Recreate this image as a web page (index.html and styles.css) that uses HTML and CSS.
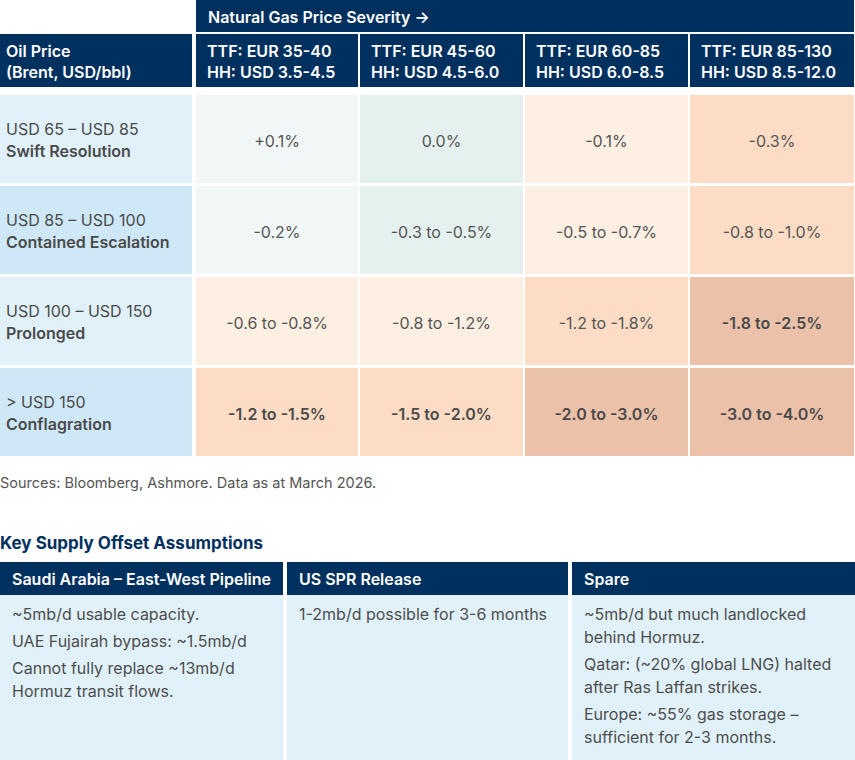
FILE: index.html
```html
<!DOCTYPE html>
<html lang="en">
<head>
<meta charset="utf-8">
<title>Oil and Gas Price Severity Matrix</title>
<link rel="stylesheet" href="styles.css">
</head>
<body>
<section class="matrix">
  <div class="matrix-head">
    <div class="corner"></div>
    <div class="severity">Natural Gas Price Severity →</div>
    <div class="hd hd-oil"><div>Oil Price<br>(Brent, USD/bbl)</div></div>
    <div class="hd"><div>TTF: EUR 35-40<br>HH: USD 3.5-4.5</div></div>
    <div class="hd"><div>TTF: EUR 45-60<br>HH: USD 4.5-6.0</div></div>
    <div class="hd"><div>TTF: EUR 60-85<br>HH: USD 6.0-8.5</div></div>
    <div class="hd"><div>TTF: EUR 85-130<br>HH: USD 8.5-12.0</div></div>
  </div>
  <div class="matrix-body">
    <div class="lbl lbl-a"><div><span class="rng">USD 65 – USD 85</span><span class="scn">Swift Resolution</span></div></div>
    <div class="val g1">+0.1%</div>
    <div class="val g2">0.0%</div>
    <div class="val p1">-0.1%</div>
    <div class="val p2">-0.3%</div>

    <div class="lbl lbl-b"><div><span class="rng">USD 85 – USD 100</span><span class="scn">Contained Escalation</span></div></div>
    <div class="val g1">-0.2%</div>
    <div class="val g2">-0.3 to -0.5%</div>
    <div class="val p1">-0.5 to -0.7%</div>
    <div class="val p2">-0.8 to -1.0%</div>

    <div class="lbl lbl-a"><div><span class="rng">USD 100 – USD 150</span><span class="scn">Prolonged</span></div></div>
    <div class="val p1">-0.6 to -0.8%</div>
    <div class="val p1">-0.8 to -1.2%</div>
    <div class="val p2">-1.2 to -1.8%</div>
    <div class="val p3 bold">-1.8 to -2.5%</div>

    <div class="lbl lbl-b"><div><span class="rng">&gt; USD 150</span><span class="scn">Conflagration</span></div></div>
    <div class="val p2 bold">-1.2 to -1.5%</div>
    <div class="val p2 bold">-1.5 to -2.0%</div>
    <div class="val p3 bold">-2.0 to -3.0%</div>
    <div class="val p3 bold">-3.0 to -4.0%</div>
  </div>
  <p class="source">Sources: Bloomberg, Ashmore. Data as at March 2026.</p>
</section>

<section class="supply">
  <h2 class="supply-title">Key Supply Offset Assumptions</h2>
  <div class="supply-grid">
    <div class="sup-col">
      <div class="sup-hd">Saudi Arabia – East-West Pipeline</div>
      <div class="sup-body">
        <p>~5mb/d usable capacity.</p>
        <p>UAE Fujairah bypass: ~1.5mb/d</p>
        <p>Cannot fully replace ~13mb/d Hormuz transit flows.</p>
      </div>
    </div>
    <div class="sup-col">
      <div class="sup-hd">US SPR Release</div>
      <div class="sup-body">
        <p>1-2mb/d possible for 3-6 months</p>
      </div>
    </div>
    <div class="sup-col">
      <div class="sup-hd">Spare</div>
      <div class="sup-body">
        <p>~5mb/d but much landlocked behind Hormuz.</p>
        <p>Qatar: (~20% global LNG) halted after Ras Laffan strikes.</p>
        <p>Europe: ~55% gas storage – sufficient for 2-3 months.</p>
      </div>
    </div>
  </div>
</section>
</body>
</html>
```

FILE: styles.css
```css
* { box-sizing: border-box; }

html, body {
  margin: 0;
  padding: 0;
  background: #ffffff;
}

body {
  font-family: Inter, "Noto Sans", "Liberation Sans", sans-serif;
  font-size: 16px;
  color: #4d4d4d;
  width: 855px;
}

.matrix-head,
.matrix-body {
  display: grid;
  grid-template-columns: 194px 162px 163px 163px 164px;
  column-gap: 2px;
}

.matrix-head {
  grid-template-rows: 32px 53px;
  row-gap: 2px;
}

.corner { background: #ffffff; margin-right: 2px; }

.severity {
  grid-column: 2 / span 4;
  background: #00305e;
  color: #ffffff;
  font-weight: 600;
  padding: 1px 12px 0;
  display: flex;
  align-items: center;
}

.hd {
  background: #00305e;
  color: #ffffff;
  font-weight: 600;
  line-height: 21.5px;
  padding: 3px 10px 0 11px;
  display: flex;
  align-items: center;
}

.hd-oil { margin-right: 2px; padding-left: 6px; }

.matrix-body {
  margin-top: 8px;
  grid-auto-rows: 88px;
  row-gap: 3px;
}

.lbl {
  margin-right: 2px;
  padding: 2px 6px 0;
  display: flex;
  align-items: center;
  line-height: 22.5px;
  color: #4a4a4a;
}

.rng, .scn { display: block; white-space: nowrap; }
.scn { font-weight: 600; }

.lbl-a { background: #e0f1fa; }
.lbl-b { background: #cfe8f7; }

.val {
  display: flex;
  align-items: center;
  justify-content: center;
  padding-top: 3px;
  color: #555555;
}

.val.bold { font-weight: 600; color: #4a4a4a; }

.g1 { background: #f1f7f6; }
.g2 { background: #e5f1ef; }
.p1 { background: #fdefe2; }
.p2 { background: #fcdcc4; }
.p3 { background: #ebc1a9; }

.source {
  margin: 18px 0 0;
  font-size: 14.5px;
  color: #555555;
}

.supply-title {
  margin: 42px 0 0;
  font-size: 17px;
  font-weight: 700;
  color: #00305e;
  line-height: 20px;
}

.supply-grid {
  margin-top: 9px;
  display: grid;
  grid-template-columns: 283px 281px 283px;
  column-gap: 4px;
}

.sup-col {
  display: flex;
  flex-direction: column;
}

.sup-hd {
  background: #00305e;
  color: #ffffff;
  font-weight: 600;
  height: 33px;
  padding: 1px 12px 0;
  display: flex;
  align-items: center;
  white-space: nowrap;
}

.sup-body {
  flex: 1;
  background: #e0f1fa;
  padding: 8px 12px 10px;
  line-height: 23px;
  color: #4d4d4d;
}

.sup-body p { margin: 0 0 4px; }
```
